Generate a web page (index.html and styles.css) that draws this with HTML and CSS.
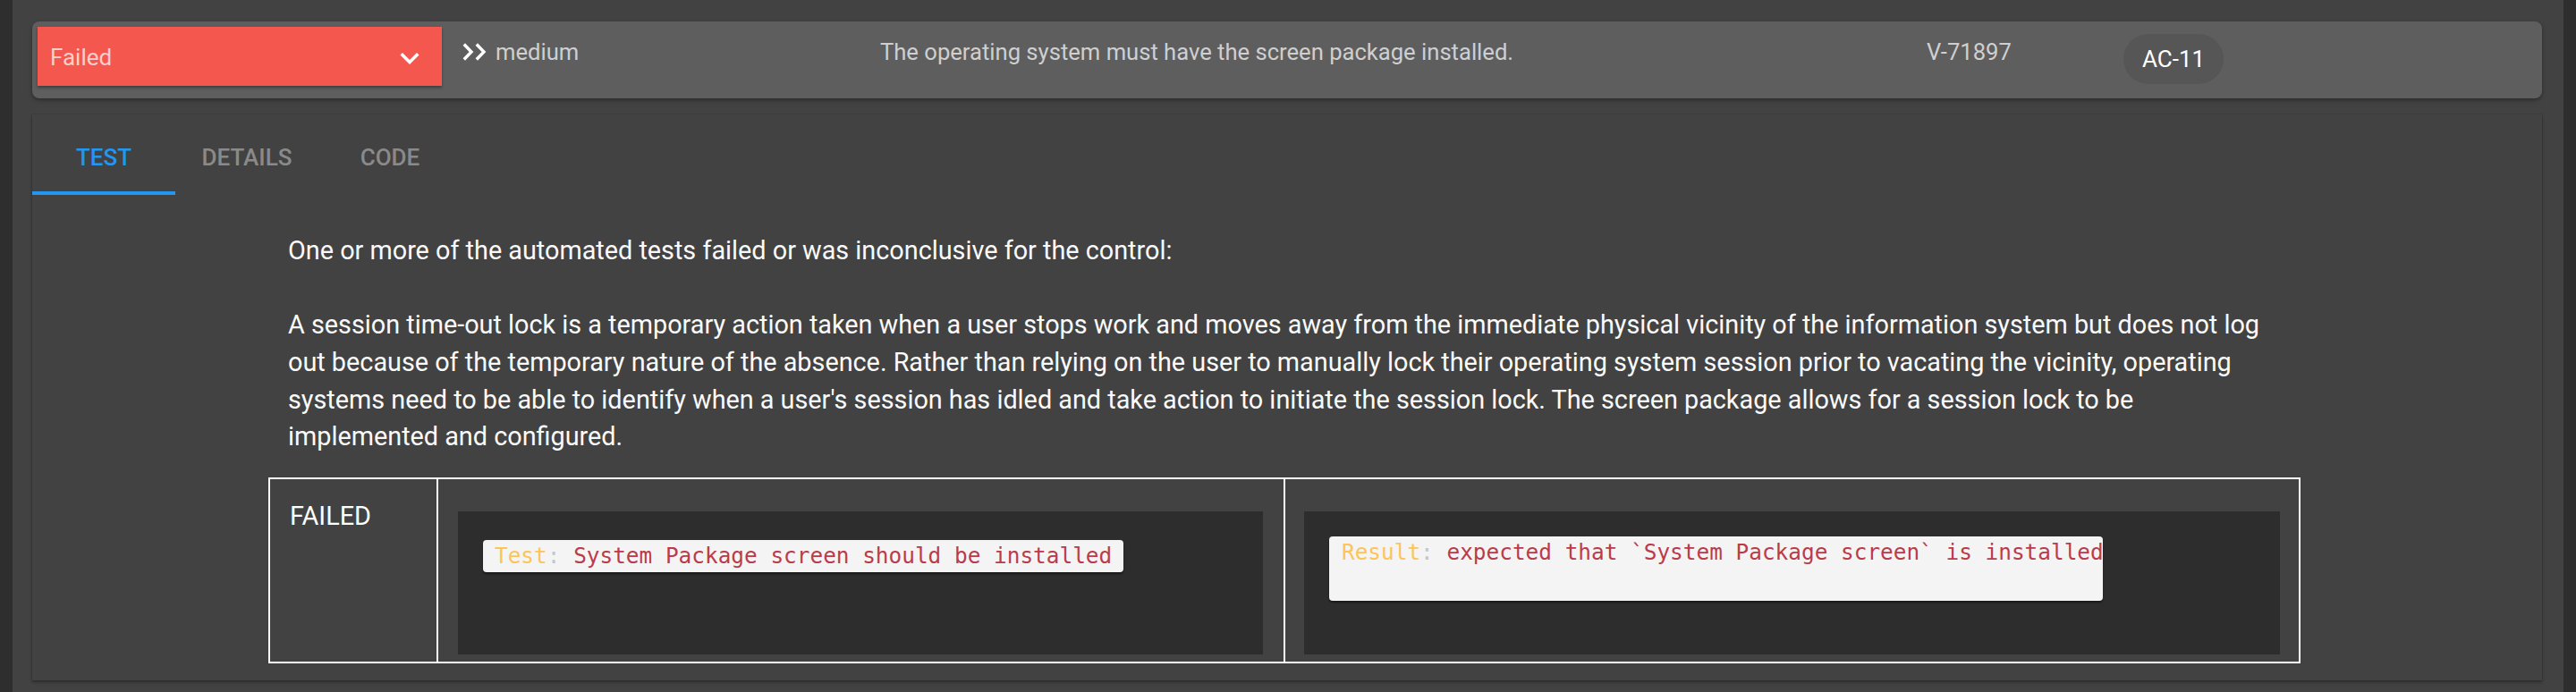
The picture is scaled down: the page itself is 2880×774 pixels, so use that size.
FILE: index.html
```html
<!DOCTYPE html>
<html lang="en">
<head>
<meta charset="utf-8">
<title>Control result</title>
<link rel="stylesheet" href="styles.css">
</head>
<body>
<div class="app">
  <div class="panel">
    <div class="panel-header">
      <div class="status-select">
        <span class="status-label">Failed</span>
        <svg class="chev-down" viewBox="0 0 24 24" width="42" height="42"><path d="M16.59 8.59L12 13.17 7.41 8.59 6 10l6 6 6-6z" fill="#ffffff"/></svg>
      </div>
      <div class="severity">
        <svg class="sev-icon" viewBox="0 0 28 20" width="28" height="20"><polyline points="1.8,1.5 10,10 1.8,18.5" fill="none" stroke="#ffffff" stroke-width="3.4"/><polyline points="15.8,1.5 24,10 15.8,18.5" fill="none" stroke="#ffffff" stroke-width="3.4"/></svg>
        <span>medium</span>
      </div>
      <div class="title">The operating system must have the screen package installed.</div>
      <div class="vid">V-71897</div>
      <div class="chips"><span class="chip">AC-11</span></div>
    </div>
    <div class="panel-body">
      <div class="tabs">
        <div class="tab active">TEST</div>
        <div class="tab">DETAILS</div>
        <div class="tab">CODE</div>
      </div>
      <div class="content">
        <p class="desc">One or more of the automated tests failed or was inconclusive for the control:<br><br>A session time-out lock is a temporary action taken when a user stops work and moves away from the immediate physical vicinity of the information system but does not log out because of the temporary nature of the absence. Rather than relying on the user to manually lock their operating system session prior to vacating the vicinity, operating systems need to be able to identify when a user's session has idled and take action to initiate the session lock. The screen package allows for a session lock to be implemented and configured.</p>
        <div class="results">
          <div class="cell status-cell">FAILED</div>
          <div class="cell code-cell">
            <div class="codeblock test-block">
              <div class="snippet test-snippet"><span class="key">Test</span><span class="punc">:</span> <span class="val">System Package screen should be installed</span></div>
            </div>
          </div>
          <div class="cell code-cell code-cell-right">
            <div class="codeblock result-block">
              <div class="snippet result-snippet"><span class="key">Result</span><span class="punc">:</span> <span class="val">expected that `System Package screen` is installed</span></div>
            </div>
          </div>
        </div>
      </div>
    </div>
  </div>
</div>
</body>
</html>
```
FILE: styles.css
```css
html, body {
  margin: 0;
  padding: 0;
  height: 100%;
}

body {
  background: #2e2e2e;
  font-family: Roboto, "Noto Sans", "Liberation Sans", sans-serif;
  overflow: hidden;
}

.app {
  margin: 0 14px;
  height: 774px;
  background: #424242;
  padding: 24px 24px 0 22px;
  box-sizing: border-box;
  overflow: hidden;
}

/* Header */
.panel-header {
  height: 86px;
  box-sizing: border-box;
  padding: 6px 6px 0 6px;
  background: #5e5e5e;
  border-radius: 8px;
  box-shadow: 0 2px 4px rgba(0, 0, 0, 0.35);
  display: grid;
  grid-template-columns: 452px 490px 1170px 220px auto;
  align-items: start;
}

.status-select {
  height: 66px;
  background: #f4574e;
  display: flex;
  align-items: center;
  justify-content: space-between;
  padding: 0 15px 0 14px;
  box-sizing: border-box;
  box-shadow: 0 2px 3px rgba(0, 0, 0, 0.35);
}

.status-label {
  font-size: 26px;
  line-height: 30px;
  color: #fccdca;
  padding-top: 2px;
}

.chev-down {
  display: block;
  margin-top: 3px;
}

.severity,
.title,
.vid {
  padding-top: 13px;
  font-size: 25.6px;
  line-height: 30px;
  color: #cfcfcf;
}

.severity {
  display: flex;
  align-items: center;
  gap: 9px;
  padding-left: 23px;
}

.sev-icon {
  display: block;
}

.chips {
  padding-top: 8px;
}

.chip {
  display: inline-flex;
  align-items: center;
  height: 56px;
  padding: 0 21px;
  border-radius: 28px;
  background: #565656;
  color: #ffffff;
  font-size: 26px;
  line-height: 30px;
}

/* Body */
.panel-body {
  margin-top: 18px;
  padding-bottom: 19px;
  box-shadow: 0 2px 3px rgba(0, 0, 0, 0.35), 0 0 1px rgba(0, 0, 0, 0.3);
}

.tabs {
  display: flex;
  height: 90px;
}

.tab {
  width: 160px;
  height: 90px;
  box-sizing: border-box;
  padding-top: 33px;
  text-align: center;
  font-size: 26px;
  font-weight: 500;
  line-height: 30px;
  color: #8a8a8a;
  border-bottom: 4px solid transparent;
}

.tab.active {
  color: #2196f3;
  border-bottom-color: #2196f3;
}

.content {
  margin-left: 264px;
  width: 2272px;
  padding-top: 42px;
}

.desc {
  margin: 0 0 24px 0;
  padding: 0 22px;
  font-size: 28.8px;
  line-height: 41.67px;
  color: #fafafa;
}

.results {
  display: grid;
  grid-template-columns: 186px 947px 1fr;
  border: 2px solid #ffffff;
}

.cell {
  box-sizing: border-box;
  height: 204px;
}

.status-cell {
  padding: 21px 22px;
  font-size: 28.8px;
  line-height: 41.67px;
  color: #ffffff;
}

.code-cell {
  border-left: 2px solid #ffffff;
  padding: 36px 23px 8px 22px;
}

.code-cell-right {
  padding: 36px 21px 8px 21px;
}

.codeblock {
  height: 160px;
  background: #2d2d2d;
  box-sizing: border-box;
  padding: 32px 28px 0 28px;
}

.result-block {
  padding-top: 28px;
}

.snippet {
  display: inline-block;
  background: #f4f4f4;
  border-radius: 4px;
  box-shadow: 0 2px 2px rgba(0, 0, 0, 0.45);
  font-family: "DejaVu Sans Mono", "Liberation Mono", monospace;
  font-size: 24.4px;
  line-height: 28px;
  white-space: pre;
  box-sizing: border-box;
}

.test-snippet {
  padding: 4px 13px;
}

.result-snippet {
  padding: 4px 0 0 14px;
  height: 72px;
  width: 865px;
  overflow: hidden;
}

.key {
  color: #fbc55a;
}

.punc {
  color: #c6c6c6;
}

.val {
  color: #bb3b4a;
}
```
